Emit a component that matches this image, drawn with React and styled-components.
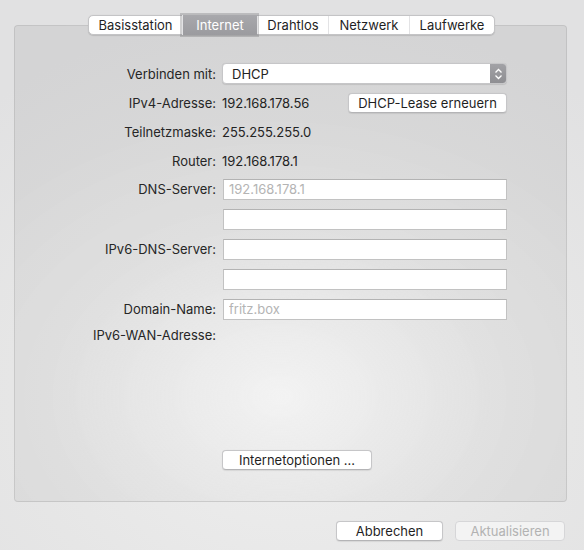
import styled, { createGlobalStyle } from "styled-components";

const GlobalStyle = createGlobalStyle`
    html, body {
        margin: 0;
        padding: 0;
    }

    body {
        font-family: Inter, "Noto Sans", "DejaVu Sans", sans-serif;
        font-size: 13px;
        color: #232323;
        -webkit-font-smoothing: antialiased;
    }
`;

const tabs = [
    { name: "Basisstation", w: 93 },
    { name: "Internet", w: 75, active: true },
    { name: "Drahtlos", w: 71 },
    { name: "Netzwerk", w: 81 },
    { name: "Laufwerke", w: 85 }
];

const Chevrons = () => (
    <svg width="9" height="12" viewBox="0 0 9 12">
        <path d="M1.5 4.5 L4.5 1.5 L7.5 4.5" fill="none" stroke="#fff" strokeWidth="1.3" />
        <path d="M1.5 7.5 L4.5 10.5 L7.5 7.5" fill="none" stroke="#fff" strokeWidth="1.3" />
    </svg>
);

const App = () => {
    return (
        <Window>
            <GlobalStyle />
            <TabBar>
                {tabs.map((tab) => (
                    <Tab key={tab.name} $w={tab.w} $active={tab.active}>
                        {tab.name}
                    </Tab>
                ))}
            </TabBar>
            <Panel>
                <Row $h={31}>
                    <Label>Verbinden mit:</Label>
                    <Popup>
                        <PopupText>DHCP</PopupText>
                        <Stepper>
                            <Chevrons />
                        </Stepper>
                    </Popup>
                </Row>
                <Row $h={28}>
                    <Label>IPv4-Adresse:</Label>
                    <Value>
                        <span>192.168.178.56</span>
                        <Button $w={159}>DHCP-Lease erneuern</Button>
                    </Value>
                </Row>
                <Row $h={30}>
                    <Label>Teilnetzmaske:</Label>
                    <Value>255.255.255.0</Value>
                </Row>
                <Row $h={27}>
                    <Label>Router:</Label>
                    <Value>192.168.178.1</Value>
                </Row>
                <Row>
                    <Label>DNS-Server:</Label>
                    <Field placeholder="192.168.178.1" />
                </Row>
                <Row>
                    <Label />
                    <Field />
                </Row>
                <Row>
                    <Label>IPv6-DNS-Server:</Label>
                    <Field />
                </Row>
                <Row>
                    <Label />
                    <Field />
                </Row>
                <Row>
                    <Label>Domain-Name:</Label>
                    <Field placeholder="fritz.box" />
                </Row>
                <Row $h={22}>
                    <Label>IPv6-WAN-Adresse:</Label>
                </Row>
                <BottomRow>
                    <Label />
                    <Button $w={150}>Internetoptionen ...</Button>
                </BottomRow>
            </Panel>
            <Footer>
                <Button $w={107}>Abbrechen</Button>
                <Button $w={110} disabled>Aktualisieren</Button>
            </Footer>
        </Window>
    );
};

export default App;

const Window = styled.div`
    width: 584px;
    height: 550px;
    box-sizing: border-box;
    padding-top: 15px;
    display: flex;
    flex-direction: column;
    background: radial-gradient(ellipse 80% 70% at 50% 72%, #efefef 0%, #e6e6e6 60%, #e1e1e2 100%);
    overflow: hidden;
`;

const TabBar = styled.div`
    align-self: flex-start;
    margin-left: 88px;
    height: 20px;
    display: flex;
    position: relative;
    z-index: 1;
    background: #fff;
    border: 1px solid #c4c4c6;
    border-radius: 5px;
    box-sizing: border-box;
    box-shadow: 0 0.5px 1px rgba(0, 0, 0, 0.12);
`;

const Tab = styled.div`
    width: ${({ $w }) => $w}px;
    display: flex;
    align-items: center;
    justify-content: center;
    box-sizing: border-box;
    color: ${({ $active }) => ($active ? "#fff" : "#1f1f1f")};
    background: ${({ $active }) => ($active ? "linear-gradient(#a8a8ac, #9b9b9f)" : "transparent")};
    box-shadow: ${({ $active }) => ($active ? "0 0 0 2px rgba(120, 120, 124, 0.35)" : "none")};
    margin: ${({ $active }) => ($active ? "-1px 0" : "0")};

    & + & {
        border-left: ${({ $active }) => ($active ? "none" : "1px solid #e3e3e5")};
    }
`;

const Panel = styled.div`
    margin: -10px 17px 0 14px;
    height: 477px;
    box-sizing: border-box;
    padding: 32px 0 31px;
    display: flex;
    flex-direction: column;
    border: 1px solid rgba(0, 0, 0, 0.09);
    border-radius: 4px;
    background: radial-gradient(ellipse 70% 60% at 48% 78%, rgba(255, 255, 255, 0.25) 0%, rgba(0, 0, 0, 0.03) 55%, rgba(0, 0, 0, 0.055) 100%);
`;

const Row = styled.div`
    height: ${({ $h }) => $h || 30}px;
    display: grid;
    grid-template-columns: 201px 285px;
    column-gap: 6px;
    align-items: center;
`;

const BottomRow = styled(Row)`
    margin-top: auto;
    height: 20px;
`;

const Label = styled.div`
    text-align: right;
    white-space: nowrap;
    color: #262626;
`;

const Value = styled.div`
    display: flex;
    align-items: center;
    justify-content: space-between;
    white-space: nowrap;
`;

const Popup = styled.div`
    height: 21px;
    display: flex;
    align-items: stretch;
    box-sizing: border-box;
    background: #fff;
    border: 1px solid #c6c6c8;
    border-radius: 4px;
    overflow: hidden;
    box-shadow: 0 0.5px 1px rgba(0, 0, 0, 0.1);
`;

const PopupText = styled.div`
    flex: 1;
    display: flex;
    align-items: center;
    padding-left: 9px;
`;

const Stepper = styled.div`
    width: 16px;
    display: flex;
    align-items: center;
    justify-content: center;
    background: linear-gradient(#a2a2a6, #8e8e92);
`;

const Field = styled.input`
    width: 284px;
    height: 21px;
    margin-left: 1px;
    box-sizing: border-box;
    padding: 0 5px;
    font-family: inherit;
    font-size: 13px;
    color: #232323;
    background: #fff;
    border: 1px solid #c2c2c2;
    border-top-color: #b3b3b3;
    border-radius: 0;
    outline: none;

    &::placeholder {
        color: #b4b4b4;
    }
`;

const Button = styled.button`
    width: ${({ $w }) => $w}px;
    height: 20px;
    padding: 0;
    font-family: inherit;
    font-size: 13px;
    color: #1f1f1f;
    background: #fff;
    border: 1px solid #c6c6c8;
    border-bottom-color: #b4b4b6;
    border-radius: 4px;
    box-shadow: 0 0.5px 1px rgba(0, 0, 0, 0.08);

    &:disabled {
        color: #b2b2b2;
        background: #f3f3f3;
        border-color: #d6d6d8;
        box-shadow: none;
    }
`;

const Footer = styled.div`
    display: flex;
    justify-content: flex-end;
    gap: 12px;
    padding: 19px 19px 0 0;
`;
